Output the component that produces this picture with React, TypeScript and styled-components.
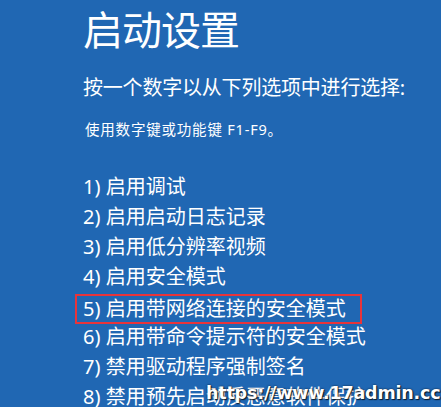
import styled, { createGlobalStyle } from 'styled-components';

const GlobalStyle = createGlobalStyle`
  html, body {
    margin: 0;
    padding: 0;
    background-color: #2067b3;
  }
`;

const Screen = styled.div`
  position: relative;
  width: 441px;
  height: 407px;
  overflow: hidden;
  box-sizing: border-box;
  padding: 5px 0 0 83px;
  background-color: #2067b3;
  color: #ffffff;
  font-family: "Noto Sans", "Noto Sans CJK SC", sans-serif;
`;

const Title = styled.h1`
  margin: 0;
  font-size: 40px;
  line-height: 50px;
  font-weight: 400;
  letter-spacing: -1px;
`;

const Prompt = styled.div`
  margin-top: 18px;
  font-size: 20px;
  line-height: 30px;
  letter-spacing: -0.2px;
`;

const Hint = styled.div`
  margin-top: 16px;
  margin-left: 2px;
  font-size: 14.5px;
  line-height: 20px;
  letter-spacing: 0.8px;
`;

const OptionList = styled.ol`
  list-style: none;
  margin: 33px 0 0 0;
  padding: 0;
`;

const Option = styled.li<{ $selected?: boolean }>`
  box-sizing: border-box;
  height: 30px;
  font-size: 20px;
  line-height: ${(p) => (p.$selected ? '26px' : '30px')};
  white-space: nowrap;
  ${(p) =>
    p.$selected &&
    `
    width: 287px;
    margin: 2px 0 -2px -8px;
    padding-left: 6px;
    border: 2px solid #e8343a;
  `}
`;

const Watermark = styled.div`
  position: absolute;
  left: 206px;
  top: 381px;
  font-family: "DejaVu Sans", sans-serif;
  font-weight: 700;
  font-size: 17.5px;
  line-height: 24px;
  letter-spacing: -0.2px;
  color: #ffffff;
  text-shadow: 0 0 2px rgba(0, 0, 0, 0.8), 1px 1px 1px rgba(0, 0, 0, 0.7);
  white-space: nowrap;
`;

const options = [
  '1) 启用调试',
  '2) 启用启动日志记录',
  '3) 启用低分辨率视频',
  '4) 启用安全模式',
  '5) 启用带网络连接的安全模式',
  '6) 启用带命令提示符的安全模式',
  '7) 禁用驱动程序强制签名',
  '8) 禁用预先启动反恶意软件保护',
  '9) 禁用失败后自动重新启动',
];

export default function App() {
  return (
    <>
      <GlobalStyle />
      <Screen>
        <Title>启动设置</Title>
        <Prompt>按一个数字以从下列选项中进行选择:</Prompt>
        <Hint>使用数字键或功能键 F1-F9。</Hint>
        <OptionList>
          {options.map((text, i) => (
            <Option key={text} $selected={i === 4}>
              {text}
            </Option>
          ))}
        </OptionList>
        <Watermark>https://www.17admin.cc</Watermark>
      </Screen>
    </>
  );
}
